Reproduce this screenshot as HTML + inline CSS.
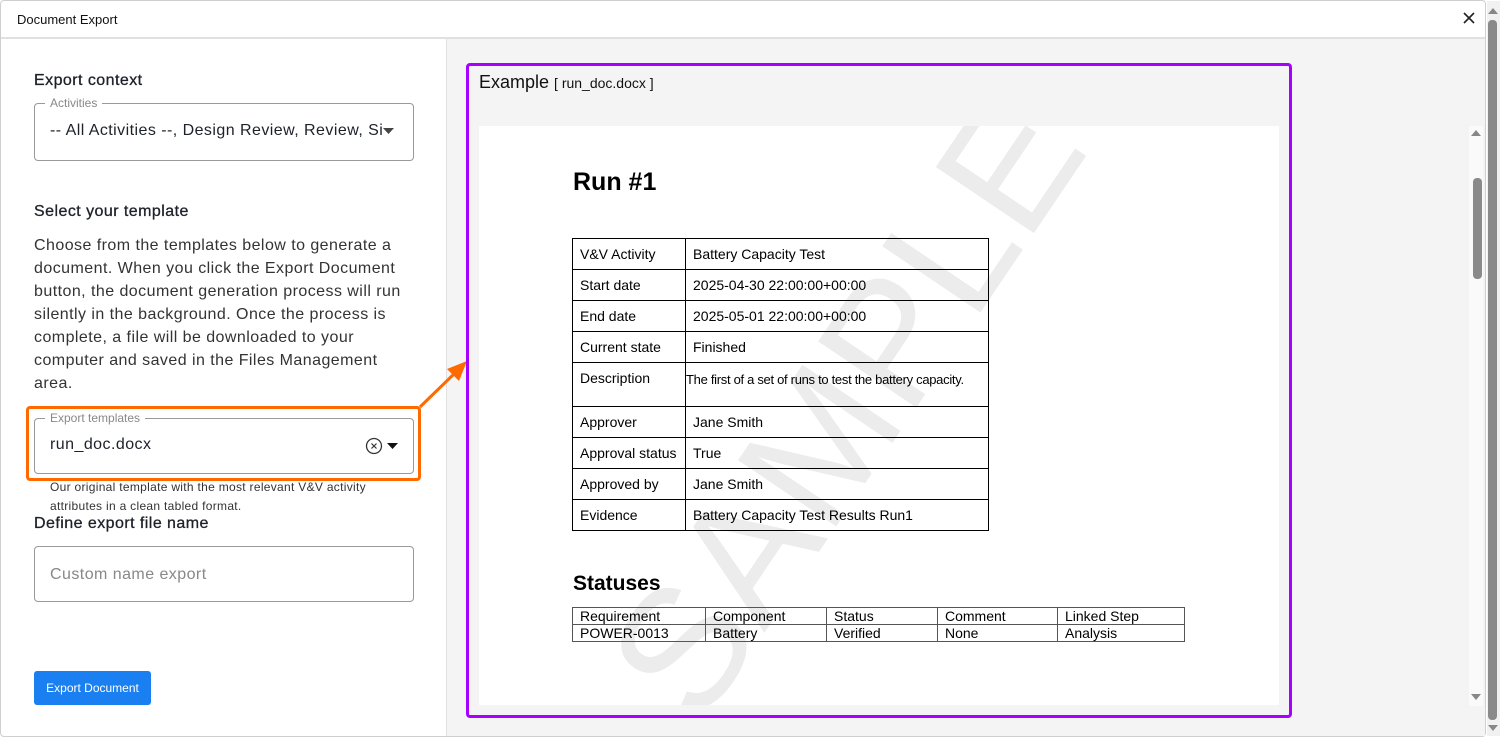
<!DOCTYPE html>
<html style="overflow:hidden"><head><meta charset="utf-8"><style>
*{box-sizing:border-box;margin:0;padding:0}
body{width:1502px;height:737px;overflow:hidden;background:#fff;font-family:"Liberation Sans",Arial,sans-serif;position:relative;color:#1d2129}
.abs{position:absolute}
.doc{font-family:"Liberation Sans",Arial,sans-serif;color:#000}
table{border-collapse:collapse}
.t1 td{border:1.5px solid #000;font-size:14px;padding:0 0 0 7px;vertical-align:top;padding-top:7px}
.t2 td{border:1px solid #555;font-size:14px;padding:0 0 0 7px;line-height:16px}
.ls{letter-spacing:0.45px}
.h{-webkit-text-stroke:0.3px #1d2129}
</style></head><body>
<div class="abs" style="left:0;top:0;width:1486px;height:737px;border:1px solid #cfcfcf;border-radius:4px"></div>
<div class="abs" style="left:17px;top:12px;font-size:13px;color:#111">Document Export</div>
<svg class="abs" style="left:1462px;top:11px" width="14" height="14"><path d="M2 2L12 12M12 2L2 12" stroke="#222" stroke-width="1.6"/></svg>
<div class="abs" style="left:1px;top:37px;width:1484px;height:2px;background:#e0e0e0"></div>
<div class="abs" style="left:446px;top:39px;width:1039px;height:697px;background:#f4f4f4;border-left:1px solid #e0e0e0"></div>
<div class="abs" style="left:1487px;top:1px;width:13px;height:735px;background:#f1f1f1"></div>
<div class="abs" style="left:1488px;top:20px;width:9px;height:700px;background:#8a8a8a;border-radius:4px"></div>
<svg class="abs" style="left:1488px;top:7px" width="10" height="8"><path d="M0 7L5 1L10 7Z" fill="#888"/></svg>
<svg class="abs" style="left:1488px;top:724px" width="10" height="8"><path d="M0 1L5 7L10 1Z" fill="#888"/></svg>
<div class="abs ls h" style="left:34px;top:72px;font-size:16px;color:#1d2129">Export context</div>
<div class="abs" style="left:34px;top:103px;width:380px;height:58px;border:1px solid #999;border-radius:4px"></div>
<div class="abs" style="left:45px;top:96px;padding:0 5px;background:#fff;font-size:12px;color:#888">Activities</div>
<div class="abs ls" style="left:50px;top:122px;font-size:16px;color:#1d2129;width:332px;overflow:hidden;white-space:nowrap">-- All Activities --, Design Review, Review, Single Run</div>
<svg class="abs" style="left:383px;top:128px" width="11" height="7"><path d="M0 0H11L5.5 6Z" fill="#444"/></svg>
<div class="abs ls h" style="left:34px;top:203px;font-size:16px;color:#1d2129">Select your template</div>
<div class="abs ls" style="left:34px;top:234px;width:400px;font-size:16px;line-height:23px;color:#333;white-space:nowrap">Choose from the templates below to generate a<br>document. When you click the Export Document<br>button, the document generation process will run<br>silently in the background. Once the process is<br>complete, a file will be downloaded to your<br>computer and saved in the Files Management<br>area.</div>
<div class="abs" style="left:26px;top:406px;width:395px;height:75px;border:3px solid #ff6a00;border-radius:4px"></div>
<div class="abs" style="left:34px;top:418px;width:380px;height:56px;border:1px solid #999;border-radius:4px"></div>
<div class="abs" style="left:45px;top:411px;padding:0 5px;background:#fff;font-size:12px;color:#888">Export templates</div>
<div class="abs ls" style="left:50px;top:436px;font-size:16px;color:#1d2129">run_doc.docx</div>
<svg class="abs" style="left:365px;top:437px" width="18" height="18"><circle cx="9" cy="9" r="7.5" fill="none" stroke="#333" stroke-width="1.3"/><path d="M6.5 6.5L11.5 11.5M11.5 6.5L6.5 11.5" stroke="#333" stroke-width="1.2"/></svg>
<svg class="abs" style="left:387px;top:443px" width="11" height="7"><path d="M0 0H11L5.5 6Z" fill="#111"/></svg>
<div class="abs" style="left:50px;top:478px;width:360px;font-size:12px;line-height:19px;color:#333;letter-spacing:0.3px;white-space:nowrap">Our original template with the most relevant V&amp;V activity<br>attributes in a clean tabled format.</div>
<div class="abs ls h" style="left:34px;top:515px;font-size:16px;color:#1d2129">Define export file name</div>
<div class="abs" style="left:34px;top:546px;width:380px;height:56px;border:1px solid #999;border-radius:4px"></div>
<div class="abs ls" style="left:50px;top:566px;font-size:16px;color:#888">Custom name export</div>
<div class="abs" style="left:34px;top:671px;width:117px;height:34px;background:#1a7ff0;border-radius:3px;color:#fff;font-size:12px;line-height:34px;text-align:center">Export Document</div>
<svg class="abs" style="left:415px;top:355px" width="60" height="60"><path d="M5 52L42 16" stroke="#ff6a00" stroke-width="3"/><path d="M52 6L32 14L44 26Z" fill="#ff6a00"/></svg>
<div class="abs" style="left:466px;top:63px;width:826px;height:655px;border:3px solid #a600ff;border-radius:4px"></div>
<div class="abs" style="left:479px;top:72px;font-size:18px;color:#111">Example <span style="font-size:14px">[ run_doc.docx ]</span></div>
<div class="abs" style="left:479px;top:126px;width:800px;height:579px;background:#fff;overflow:hidden">
 <div class="abs" style="left:31px;top:219px;font-size:172px;color:#ececec;transform:rotate(-56deg);transform-origin:center;white-space:nowrap;width:640px;text-align:center;line-height:170px">SAMPLE</div>
</div>
<div class="abs" style="left:1469px;top:126px;width:14px;height:580px;background:#fafafa"></div>
<svg class="abs" style="left:1471px;top:129px" width="10" height="8"><path d="M0 7L5 1L10 7Z" fill="#888"/></svg>
<svg class="abs" style="left:1471px;top:693px" width="10" height="8"><path d="M0 1L5 7L10 1Z" fill="#888"/></svg>
<div class="abs" style="left:1473px;top:178px;width:9px;height:101px;background:#8a8a8a;border-radius:4px"></div>
<div class="abs doc" style="left:573px;top:168px;font-size:25px;font-weight:bold">Run #1</div>
<table class="abs doc t1" style="left:572px;top:238px;width:417px">
<tr style="height:31px"><td style="width:113px">V&amp;V Activity</td><td>Battery Capacity Test</td></tr>
<tr style="height:31px"><td>Start date</td><td>2025-04-30 22:00:00+00:00</td></tr>
<tr style="height:31px"><td>End date</td><td>2025-05-01 22:00:00+00:00</td></tr>
<tr style="height:31px"><td>Current state</td><td>Finished</td></tr>
<tr style="height:44px"><td>Description</td><td style="padding-left:0;font-size:13px;letter-spacing:-0.3px;white-space:nowrap;padding-top:9px">The first of a set of runs to test the battery capacity.</td></tr>
<tr style="height:31px"><td>Approver</td><td>Jane Smith</td></tr>
<tr style="height:31px"><td>Approval status</td><td>True</td></tr>
<tr style="height:31px"><td>Approved by</td><td>Jane Smith</td></tr>
<tr style="height:31px"><td>Evidence</td><td>Battery Capacity Test Results Run1</td></tr>
</table>
<div class="abs doc" style="left:573px;top:572px;font-size:21px;font-weight:bold">Statuses</div>
<table class="abs doc t2" style="left:572px;top:607px;width:613px">
<tr><td style="width:133px">Requirement</td><td style="width:121px">Component</td><td style="width:111px">Status</td><td style="width:120px">Comment</td><td>Linked Step</td></tr>
<tr><td>POWER-0013</td><td>Battery</td><td>Verified</td><td>None</td><td>Analysis</td></tr>
</table>
</body></html>
